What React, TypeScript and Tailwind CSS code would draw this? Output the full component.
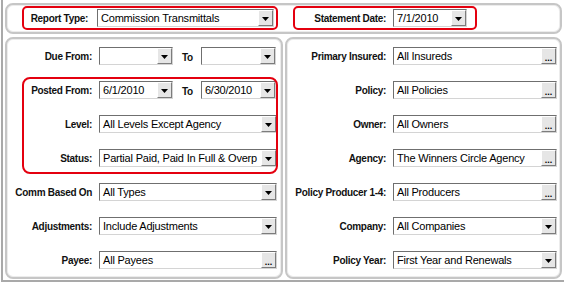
import type { ReactNode } from "react";

type Kind = "drop" | "dots";

function Field({
  value,
  kind = "drop",
  className,
}: {
  value: string;
  kind?: Kind;
  className: string;
}) {
  return (
    <div
      className={`flex h-[18px] shrink-0 items-stretch border border-t-[#6f6f6f] border-l-[#6f6f6f] border-b-[#d4d4d4] border-r-[#d4d4d4] bg-white ${className}`}
    >
      <span className="min-w-0 flex-1 overflow-hidden whitespace-nowrap pl-[3px] text-[11px] leading-[16px] tracking-[-0.2px] text-black">
        {value}
      </span>
      {kind === "drop" ? (
        <span className="flex w-[15px] shrink-0 items-center justify-center border border-t-white border-l-white border-b-[#7c7c7c] border-r-[#7c7c7c] bg-[#e6e6e6] pt-[1px]">
          <svg width="7" height="4" viewBox="0 0 7 4">
            <path d="M0 0h7L3.5 4z" fill="#000" />
          </svg>
        </span>
      ) : (
        <span className="flex w-[15px] shrink-0 items-end justify-center border border-t-white border-l-white border-b-[#7c7c7c] border-r-[#7c7c7c] bg-[#e6e6e6] pb-[1px] text-[9px] font-bold leading-[8px] text-black">
          ...
        </span>
      )}
    </div>
  );
}

function Label({ children }: { children: ReactNode }) {
  return (
    <span className="whitespace-nowrap text-[10px] font-bold tracking-[-0.3px] text-[#111]">
      {children}
    </span>
  );
}

function LeftRow({ label, children }: { label: string; children: ReactNode }) {
  return (
    <div className="flex h-[34px] items-center">
      <div className="flex w-[85px] shrink-0 justify-end">
        <Label>{label}</Label>
      </div>
      <div className="ml-[7px] flex items-center">{children}</div>
    </div>
  );
}

function RightRow({
  label,
  value,
  kind,
}: {
  label: string;
  value: string;
  kind: Kind;
}) {
  return (
    <div className="flex h-[34px] items-center">
      <div className="flex w-[99px] shrink-0 justify-end">
        <Label>{label}</Label>
      </div>
      <Field value={value} kind={kind} className="ml-[7px] w-[164px]" />
    </div>
  );
}

const panel =
  "rounded-[8px] border-2 border-[#c6c6c6] shadow-[inset_0_0_0_1px_#ececec]";

export default function App() {
  return (
    <div className="h-[285px] w-[566px] bg-white font-['Liberation_Sans',Arial,sans-serif]">
      <div className="ml-[1px] flex h-[282px] w-[563px] flex-col border-b-2 border-l-2 border-[#a9a9a9] pb-[1px] pl-[2px] pt-[3px]">
        {/* criteria header */}
        <div className={`grid h-[31px] w-[557px] shrink-0 grid-cols-[15px_256px_15px_184px] items-start pt-[1px] ${panel}`}>
          <div />
          <div className="flex h-[24px] items-center rounded-[5px] border-2 border-[#e4000f]">
            <div className="flex w-[64px] justify-end">
              <Label>Report Type:</Label>
            </div>
            <Field value="Commission Transmittals" className="ml-[9px] w-[177px]" />
          </div>
          <div />
          <div className="flex h-[24px] items-center rounded-[5px] border-2 border-[#e4000f]">
            <div className="flex w-[91px] justify-end">
              <Label>Statement Date:</Label>
            </div>
            <Field value="7/1/2010" className="ml-[7px] w-[74px]" />
          </div>
        </div>

        <div className="mt-[3px] flex flex-1 gap-[2px]">
          {/* left column */}
          <div className={`flex w-[278px] flex-col ${panel}`}>
            <LeftRow label="Due From:">
              <Field value="" className="w-[74px]" />
              <span className="ml-[9px] mr-[8px]">
                <Label>To</Label>
              </span>
              <Field value="" className="w-[75px]" />
            </LeftRow>
            <div className="relative">
              <div className="pointer-events-none absolute bottom-[1px] left-[15px] right-[3px] top-[4px] rounded-[8px] border-2 border-[#e4000f]" />
              <LeftRow label="Posted From:">
                <Field value="6/1/2010" className="w-[74px]" />
                <span className="ml-[9px] mr-[8px]">
                  <Label>To</Label>
                </span>
                <Field value="6/30/2010" className="w-[75px]" />
              </LeftRow>
              <LeftRow label="Level:">
                <Field value="All Levels Except Agency" className="w-[178px]" />
              </LeftRow>
              <LeftRow label="Status:">
                <Field
                  value="Partial Paid, Paid In Full & Overp"
                  className="w-[178px]"
                />
              </LeftRow>
            </div>
            <LeftRow label="Comm Based On">
              <Field value="All Types" className="w-[178px]" />
            </LeftRow>
            <LeftRow label="Adjustments:">
              <Field value="Include Adjustments" className="w-[178px]" />
            </LeftRow>
            <LeftRow label="Payee:">
              <Field value="All Payees" kind="dots" className="w-[178px]" />
            </LeftRow>
          </div>

          {/* right column */}
          <div className={`flex w-[277px] flex-col ${panel}`}>
            <RightRow label="Primary Insured:" value="All Insureds" kind="dots" />
            <RightRow label="Policy:" value="All Policies" kind="dots" />
            <RightRow label="Owner:" value="All Owners" kind="dots" />
            <RightRow label="Agency:" value="The Winners Circle Agency" kind="dots" />
            <RightRow label="Policy Producer 1-4:" value="All Producers" kind="dots" />
            <RightRow label="Company:" value="All Companies" kind="drop" />
            <RightRow label="Policy Year:" value="First Year and Renewals" kind="drop" />
          </div>
        </div>
      </div>
    </div>
  );
}
